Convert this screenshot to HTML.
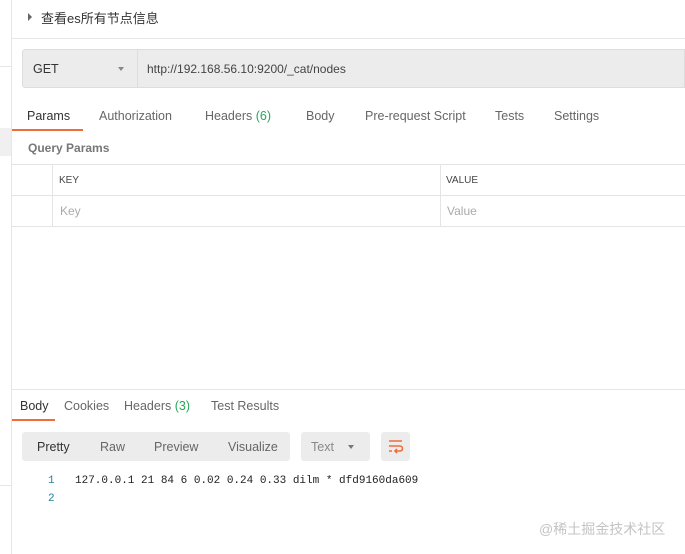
<html><head><style>
body{margin:0;width:685px;height:554px;background:#fff;font-family:"Liberation Sans","Noto Sans CJK SC",sans-serif;position:relative;overflow:hidden;color:#333}
.a{position:absolute}
.t{font-size:12.5px;color:#666}
</style></head><body>
<div class="a" style="left:11px;top:0;width:1px;height:554px;background:#e6e6e6"></div>
<div class="a" style="left:0;top:66px;width:11px;height:1px;background:#e6e6e6"></div>
<div class="a" style="left:0;top:128px;width:11px;height:28px;background:#f0f0f0"></div>
<div class="a" style="left:0;top:485px;width:11px;height:1px;background:#e6e6e6"></div>
<div class="a" style="left:28px;top:13px;width:0;height:0;border-left:4px solid #666;border-top:4px solid transparent;border-bottom:4px solid transparent"></div>
<div class="a" style="left:41px;top:8px;font-size:13px;color:#333">查看es所有节点信息</div>
<div class="a" style="left:11px;top:38px;width:674px;height:1px;background:#e6e6e6"></div>
<div class="a" style="left:22px;top:49px;width:663px;height:39px;background:#ececec;border:1px solid #ddd;border-radius:3px 0 0 3px;box-sizing:border-box"></div>
<div class="a" style="left:137px;top:50px;width:1px;height:38px;background:#ddd"></div>
<div class="a" style="left:33px;top:62px;font-size:12.5px;color:#333">GET</div>
<div class="a" style="left:118px;top:67px;border-top:4px solid #888;border-left:3.5px solid transparent;border-right:3.5px solid transparent"></div>
<div class="a" style="left:147px;top:62px;font-size:12px;color:#444">http://192.168.56.10:9200/_cat/nodes</div>
<div class="a t" style="left:27px;top:109px;color:#333">Params</div>
<div class="a t" style="left:99px;top:109px">Authorization</div>
<div class="a t" style="left:205px;top:109px">Headers <span style="color:#26a55a">(6)</span></div>
<div class="a t" style="left:306px;top:109px">Body</div>
<div class="a t" style="left:365px;top:109px">Pre-request Script</div>
<div class="a t" style="left:495px;top:109px">Tests</div>
<div class="a t" style="left:554px;top:109px">Settings</div>
<div class="a" style="left:12px;top:129px;width:71px;height:2px;background:#f06d3b"></div>
<div class="a" style="left:28px;top:141px;font-size:12px;color:#777;font-weight:bold">Query Params</div>
<div class="a" style="left:11px;top:164px;width:674px;height:1px;background:#e4e4e4"></div>
<div class="a" style="left:11px;top:195px;width:674px;height:1px;background:#e4e4e4"></div>
<div class="a" style="left:11px;top:226px;width:674px;height:1px;background:#e4e4e4"></div>
<div class="a" style="left:52px;top:165px;width:1px;height:61px;background:#e4e4e4"></div>
<div class="a" style="left:440px;top:165px;width:1px;height:61px;background:#e4e4e4"></div>
<div class="a" style="left:59px;top:175px;font-size:10px;color:#444">KEY</div>
<div class="a" style="left:446px;top:175px;font-size:10px;color:#444">VALUE</div>
<div class="a" style="left:60px;top:204px;font-size:12px;color:#aaa">Key</div>
<div class="a" style="left:447px;top:204px;font-size:12px;color:#aaa">Value</div>
<div class="a" style="left:11px;top:389px;width:674px;height:1px;background:#e6e6e6"></div>
<div class="a t" style="left:20px;top:399px;color:#333">Body</div>
<div class="a t" style="left:64px;top:399px">Cookies</div>
<div class="a t" style="left:124px;top:399px">Headers <span style="color:#26a55a">(3)</span></div>
<div class="a t" style="left:211px;top:399px">Test Results</div>
<div class="a" style="left:12px;top:419px;width:43px;height:2px;background:#f06d3b"></div>
<div class="a" style="left:22px;top:432px;width:268px;height:29px;background:#ececec;border-radius:3px"></div>
<div class="a t" style="left:37px;top:440px;color:#333">Pretty</div>
<div class="a t" style="left:100px;top:440px">Raw</div>
<div class="a t" style="left:154px;top:440px">Preview</div>
<div class="a t" style="left:228px;top:440px">Visualize</div>
<div class="a" style="left:301px;top:432px;width:69px;height:29px;background:#ececec;border-radius:3px"></div>
<div class="a t" style="left:311px;top:440px;color:#888">Text</div>
<div class="a" style="left:348px;top:445px;border-top:4px solid #777;border-left:3.5px solid transparent;border-right:3.5px solid transparent"></div>
<div class="a" style="left:381px;top:432px;width:29px;height:29px;background:#ececec;border-radius:3px"></div>
<svg class="a" style="left:387px;top:438px" width="17" height="17" viewBox="0 0 17 17"><path d="M2 3h13M2 8h11a2.5 2.5 0 0 1 0 5H8M2 13h3M10 11l-2 2 2 2" fill="none" stroke="#f06d3b" stroke-width="1.6"/></svg>
<div class="a" style="left:48px;top:475px;font-family:'Liberation Mono',monospace;font-size:11px;color:#2a7f9e">1</div>
<div class="a" style="left:48px;top:493px;font-family:'Liberation Mono',monospace;font-size:11px;color:#2a7f9e">2</div>
<div class="a" style="left:75px;top:475px;font-family:'Liberation Mono',monospace;font-size:11px;color:#222">127.0.0.1 21 84 6 0.02 0.24 0.33 dilm * dfd9160da609</div>
<div class="a" style="left:539px;top:519px;font-size:14px;color:#c4c4c4">@稀土掘金技术社区</div>
</body></html>
